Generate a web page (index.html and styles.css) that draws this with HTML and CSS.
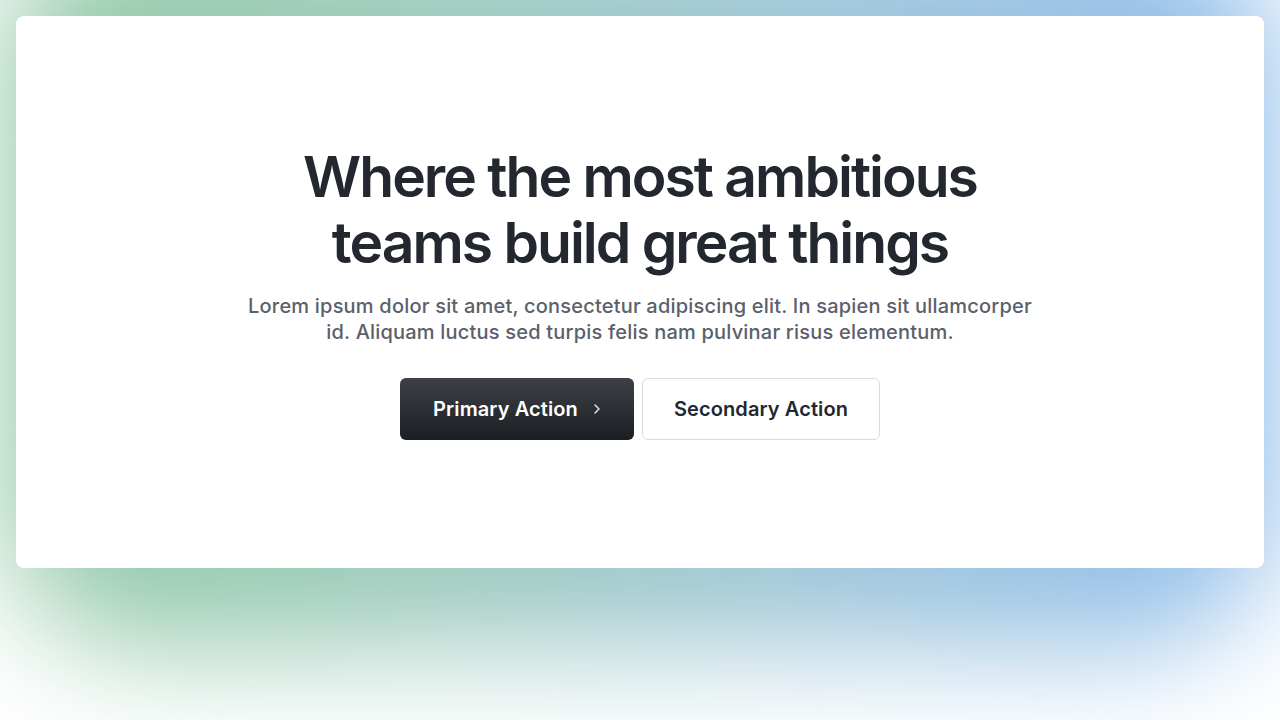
FILE: index.html
```html
<!DOCTYPE html>
<html lang="en">
<head>
<meta charset="utf-8">
<title>Hero</title>
<link rel="stylesheet" href="styles.css">
</head>
<body>
<div class="glow" aria-hidden="true"></div>
<main class="page">
  <section class="card">
    <div class="hero">
      <h1 class="title">Where the most ambitious<br>teams build great things</h1>
      <p class="lead">Lorem ipsum dolor sit amet, consectetur adipiscing elit. In sapien sit ullamcorper id. Aliquam luctus sed turpis felis nam pulvinar risus elementum.</p>
      <div class="actions">
        <a class="btn btn-primary" href="#">Primary Action
          <svg class="chev" width="16" height="16" viewBox="0 0 16 16" fill="none"><path d="M6 4l4 4-4 4" stroke="currentColor" stroke-width="1.6" stroke-linecap="round" stroke-linejoin="round"/></svg>
        </a>
        <a class="btn btn-secondary" href="#">Secondary Action</a>
      </div>
    </div>
  </section>
</main>
</body>
</html>
```

FILE: styles.css
```css
* { box-sizing: border-box; }
html, body { margin: 0; height: 100%; }
body {
  background: #ffffff;
  font-family: Inter, "Noto Sans", "Liberation Sans", sans-serif;
  overflow: hidden;
  position: relative;
  min-height: 720px;
}
.glow {
  position: absolute;
  left: 0;
  right: 0;
  top: -80px;
  height: 730px;
  border-radius: 150px;
  background: linear-gradient(90deg, #92c9a6 0%, #9dcabd 35%, #9ec5da 65%, #8fbdec 100%);
  filter: blur(60px);
  z-index: 0;
}
.page {
  position: relative;
  z-index: 1;
  padding: 16px;
}
.card {
  background: #ffffff;
  border-radius: 8px;
  height: 552px;
  display: flex;
  align-items: center;
  justify-content: center;
}
.hero {
  display: flex;
  flex-direction: column;
  align-items: center;
  text-align: center;
}
.title {
  margin: 0;
  font-size: 57px;
  line-height: 66px;
  font-weight: 600;
  letter-spacing: -0.035em;
  color: #23272f;
}
.lead {
  margin: 17px 0 0;
  width: 800px;
  font-size: 20px;
  line-height: 26px;
  font-weight: 500;
  color: #5b606c;
  letter-spacing: 0.01em;
}
.actions {
  display: flex;
  gap: 8px;
  margin-top: 33px;
}
.btn {
  display: inline-flex;
  align-items: center;
  justify-content: center;
  height: 62px;
  border-radius: 6px;
  font-size: 20px;
  font-weight: 600;
  letter-spacing: 0.005em;
  text-decoration: none;
}
.btn-primary {
  width: 234px;
  gap: 11px;
  padding-left: 4px;
  color: #ffffff;
  background: linear-gradient(180deg, #3d4046 0%, #1b1e22 100%);
}
.chev { color: #d9dbdf; }
.btn-secondary {
  width: 238px;
  color: #23272f;
  background: #ffffff;
  border: 1px solid #d8dbe0;
}
```
